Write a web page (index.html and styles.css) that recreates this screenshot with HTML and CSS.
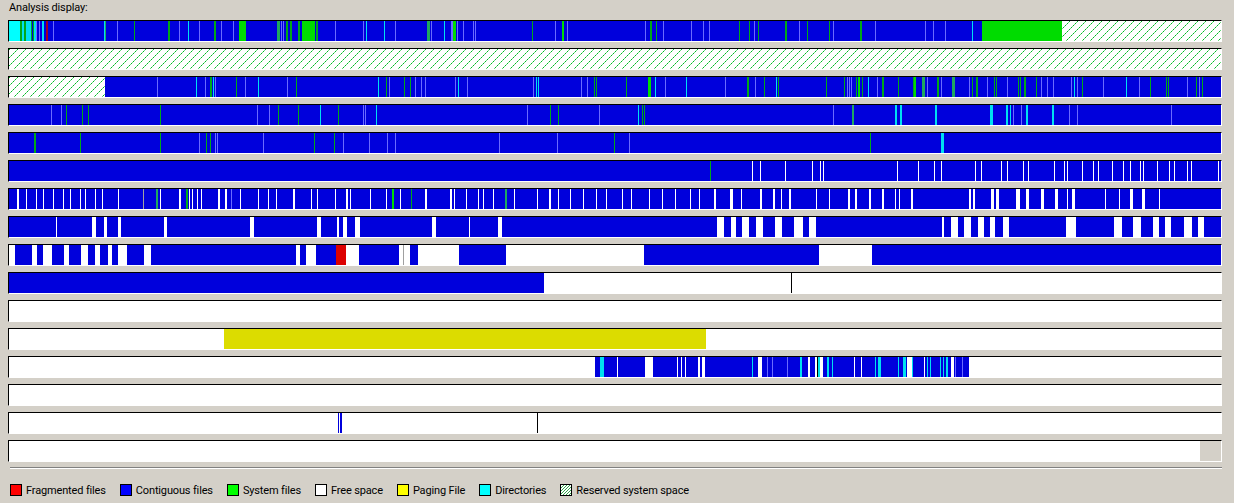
FILE: index.html
```html
<!DOCTYPE html>
<html lang="en">
<head>
    <meta charset="UTF-8">
    <title>Analysis display</title>
    <link rel="stylesheet" href="styles.css">
</head>
<body>

<div class="title">Analysis display:</div>

<!-- Cluster rows are added here by segments.js -->
<div class="rows" id="rows"></div>

<div class="separator"></div>

<div class="legend">
    <div class="legend-item"><span class="swatch seg-r"></span>Fragmented files</div>
    <div class="legend-item"><span class="swatch swatch-blue"></span>Contiguous files</div>
    <div class="legend-item"><span class="swatch swatch-green"></span>System files</div>
    <div class="legend-item"><span class="swatch swatch-white"></span>Free space</div>
    <div class="legend-item"><span class="swatch swatch-yellow"></span>Paging File</div>
    <div class="legend-item"><span class="swatch swatch-cyan"></span>Directories</div>
    <div class="legend-item"><span class="swatch swatch-hatch"></span>Reserved system space</div>
</div>

<script src="segments.js"></script>
</body>
</html>
```

FILE: styles.css
```css
body {
    font-family: Roboto, Tahoma, sans-serif;
    font-size: 11px;
    letter-spacing: -0.15px;
    color: #000;
    background-color: #d4d0c8;
    margin: 0;
    padding: 0 12px 0 8px;
    overflow: hidden;
}

.title {
    height: 20px;
    line-height: 16px;
    padding-left: 1px;
}

.rows {
    display: flex;
    flex-direction: column;
    gap: 6px;
}

.row {
    display: flex;
    box-sizing: border-box;
    height: 22px;
    border-top: 1px solid #000;
    border-left: 1px solid #000;
    border-right: 1px solid #fff;
    border-bottom: 1px solid #fff;
}

.row-blue {
    background-color: #0000dc;
}

.row-white {
    background-color: #fff;
}

/* 8px tile, one dotted diagonal, pixel by pixel so it stays crisp */
.row-hatch,
.seg-h,
.seg-H {
    background-color: #fff;
    background-image: url("data:image/svg+xml,%3Csvg xmlns='http://www.w3.org/2000/svg' width='8' height='8' shape-rendering='crispEdges'%3E%3Cg fill='%2300b424'%3E%3Crect x='7' y='0' width='1' height='1'/%3E%3Crect x='5' y='2' width='1' height='1'/%3E%3Crect x='3' y='4' width='1' height='1'/%3E%3Crect x='1' y='6' width='1' height='1'/%3E%3C/g%3E%3Cg fill='%2368dc7c'%3E%3Crect x='6' y='1' width='1' height='1'/%3E%3Crect x='4' y='3' width='1' height='1'/%3E%3Crect x='2' y='5' width='1' height='1'/%3E%3Crect x='0' y='7' width='1' height='1'/%3E%3C/g%3E%3C/svg%3E");
    background-size: 8px 8px;
}

/* keeps the dots on the same pixel parity as the hatch in the first row */
.row-hatch,
.seg-H {
    background-position: 1px 0;
}

.row span {
    display: block;
    flex: none;
}

.seg-b { background-color: #0000dc; }
.seg-g { background-color: #00dc00; }
.seg-G { background-color: #00a818; }
.seg-T { background-color: #1fa860; }
.seg-c { background-color: #00e0f0; }
.seg-C { background-color: #00ffff; }
.seg-l { background-color: #6a6aff; }
.seg-w { background-color: #fff; }
.seg-a { background-color: #a0a0a0; }
.seg-k { background-color: #000; }
.seg-R { background-color: #a00020; }
.seg-r { background-color: #dc0000; }
.seg-y { background-color: #dcdc00; }
.seg-f { background-color: #d4d0c8; }

.separator {
    height: 1px;
    margin: 5px 0 0 2px;
    background-color: #808080;
    border-bottom: 1px solid #fff;
}

.legend {
    display: flex;
    margin: 14px 0 0 2px;
    gap: 14px;
}

.legend-item {
    display: flex;
    align-items: center;
    gap: 4px;
    height: 14px;
    white-space: nowrap;
}

.swatch {
    box-sizing: border-box;
    width: 12px;
    height: 12px;
    border: 1px solid #000;
}

.swatch-blue { background-color: #0000ff; }
.swatch-green { background-color: #00ff00; }
.swatch-white { background-color: #fff; }
.swatch-yellow { background-color: #ffff00; }
.swatch-cyan { background-color: #00ffff; }

.legend-item .seg-r {
    background-color: #ff0000;
}

.swatch-hatch {
    background-color: #fff;
    background-image: linear-gradient(135deg, transparent 35%, #2fa84a 35%, #2fa84a 65%, transparent 65%);
    background-size: 3px 3px;
}
```

FILE: segments.js
```js
// One entry per row: base colour, then marks written as x:colour or x:colour:width.
// x is the page pixel of the mark, same letters as the .seg-* classes in styles.css
var ROWS = [
    ['blue', '9:C:11 20:G:2 22:c:2 24:G:2 26:c:5 31:G 33:G 34:c:2 36:l 39:l 42:c:2 46:R:2 53:l 104:c 105:T 117:l 134:G 168:G:2 179:l 188:c 199:l 214:G:2 221:l 233:l 239:g:7 277:T:3 281:l 283:l 286:G:2 290:G:2 298:G:2 302:g:13 316:G:2 335:l 363:l 366:c 384:c 395:l 427:T:3 431:l 444:c 451:l:2 453:g:3 457:l 463:l 473:l 475:l 532:G 555:l 562:g:2 567:l 645:l 650:G:2 656:G 663:l 691:l 703:l 709:l 739:G 749:G 754:l 758:G 785:G:2 799:l 807:G 829:G 833:l 860:G:2 875:l 925:l 933:l 945:l 972:c 982:g:80 1062:h:159'],
    ['hatch', ''],
    ['blue', '9:H:96 157:l 196:c 205:l 210:G:2 213:c 215:l 236:G 245:l 258:c 287:l 296:G 378:c 386:G 389:l 404:G 410:G 415:l 421:l 425:l 455:l 458:c 467:l 533:l 536:c 538:c 581:l 587:l 594:G 596:G 626:G 648:g:3 655:c 665:l 686:c 725:l 747:G:2 755:l 764:G 776:c 778:G 826:G 844:G 847:l 849:l 851:l 856:G 858:g:2 862:G 868:c 877:l 882:G:2 898:G 913:G 914:g:2 922:T:3 927:l 937:G:2 941:l 952:T:3 969:l 972:G 976:G:2 987:l 994:G 996:G 1007:l 1018:G 1020:G 1024:G:2 1036:G 1041:l 1047:l 1053:l 1071:l 1074:c 1077:l 1082:G 1103:l 1126:c 1139:l 1150:G 1166:G 1168:G 1187:l 1196:G 1199:l 1202:G'],
    ['blue', '51:l 61:l 66:G 82:G 88:G 160:G 257:l 269:l 278:G 298:G 320:c 338:G 363:l 365:l 376:c 527:l 550:G 558:G 599:l 638:c 642:G 644:G 833:l 852:T:2 895:c:2 900:c:2 935:c:2 990:c:3 1006:c:2 1010:c 1013:l 1021:l 1026:c:2 1052:c:2 1069:l 1077:l 1171:l'],
    ['blue', '34:G:2 80:G 160:G 199:l 206:G 210:G 215:l 217:l 263:l 314:G 334:G 343:l 369:l 387:l 395:l 499:l 557:l 614:G 629:l 870:G 941:c:3'],
    ['blue', '710:G 752:w 760:w 785:w 812:w 820:w 823:w 897:w 918:w 934:w 941:w 975:w 981:w 1001:w 1007:w 1023:w 1028:w 1054:w 1064:w 1067:w 1082:w 1093:w 1098:w 1112:w 1123:w 1130:w 1140:w 1143:w 1157:w 1169:w 1174:w 1187:w 1191:w 1218:w'],
    ['blue', '17:w:2 26:w 36:w 43:w 53:w 63:w 70:w 80:w 85:w 95:w 102:w 118:w 143:a 156:T:2 160:w 179:w:2 186:G:2 189:w 192:w 197:w 201:w 218:w:2 225:w:2 231:l 240:w 258:w 268:w 276:w 293:w:2 311:w 317:w 335:w 346:w:2 350:w 370:w 386:w 392:g:2 400:w 411:G 425:w:2 450:w:2 454:w 466:w 478:w 483:w 493:w 505:T:2 514:w 537:w 549:w:2 558:w 570:w 583:w 596:w 606:w 622:w 631:w 649:w 662:w 675:w 690:w 699:w 714:w:2 730:w:3 741:w 760:w:2 773:w:2 781:w 789:w:2 816:w 829:w 848:w:2 855:w:2 869:w:2 882:w:2 895:w 899:w 911:w:2 969:w:2 973:w:2 991:w:3 996:w:3 1016:w:4 1026:w:3 1041:w:3 1055:w:3 1067:w 1072:w:3 1105:w 1119:w 1130:w:3 1142:w:3 1159:w'],
    ['blue', '56:w 92:w:4 104:w:3 118:w:3 164:w:3 250:w:4 317:w:4 337:w:2 343:w:4 355:w:5 432:w:4 469:w 498:w:4 717:w:7 731:w:5 742:w:7 756:w:7 775:w:7 794:w:9 809:w:7 942:w:2 951:w:7 964:w:7 978:w:6 990:w:5 1003:w:6 1066:w:10 1114:w:8 1133:w:8 1153:w:6 1165:w:6 1184:w:8 1198:w:6'],
    ['blue', '9:w:6 32:w:5 43:w:9 64:w:5 81:w:7 95:w:5 108:w:4 118:w:9 144:w:7 296:w:4 306:w:10 336:r:10 346:w:13 399:w:4 403:a 404:w:6 418:w:41 506:w:138 819:w:53'],
    ['white', '9:b:535 791:k'],
    ['white', ''],
    ['white', '224:y:482'],
    ['white', '595:b:5 600:c:4 604:b:13 617:w 618:b:27 653:b:24 677:w 678:b:3 681:w 682:b:3 685:w 686:b:12 700:b:2 705:b:47 752:c 753:b:5 760:w:2 762:b:5 767:l 768:b:4 772:l 773:b:14 787:l 788:b:12 800:c:2 802:b:6 810:b:5 817:k 818:c:2 823:b:4 827:c:2 829:b:3 832:c 833:b:21 855:b:6 861:w 862:b:13 875:c 876:b:2 878:c:3 881:b:17 898:c 899:b:4 903:c:3 906:b 912:c 913:b:11 924:w 925:b:2 927:c 928:b:2 930:c 931:b:9 940:c 941:b:2 943:c 944:b:2 946:c:2 948:b:3 954:b 955:l 956:b:6 962:l 963:b:6'],
    ['white', ''],
    ['white', '338:b 339:w 340:b:2 537:k'],
    ['white', '1200:f:21']
];

var LEFT = 9; // first pixel inside a row
var RIGHT = 1221;

function addSeg(row, width, colour) {
    var seg = document.createElement('span');
    if (colour) seg.className = 'seg-' + colour;
    seg.style.width = width + 'px';
    row.appendChild(seg);
}

var container = document.getElementById('rows');

ROWS.forEach(function (data) {
    var row = document.createElement('div');
    row.className = 'row row-' + data[0];
    var x = LEFT;

    data[1].split(' ').forEach(function (mark) {
        if (!mark) return;
        var parts = mark.split(':');
        var start = Number(parts[0]);
        var width = Number(parts[2] || 1);
        if (start > x) addSeg(row, start - x);
        addSeg(row, width, parts[1]);
        x = start + width;
    });

    if (x < RIGHT) addSeg(row, RIGHT - x);
    container.appendChild(row);
});
```
